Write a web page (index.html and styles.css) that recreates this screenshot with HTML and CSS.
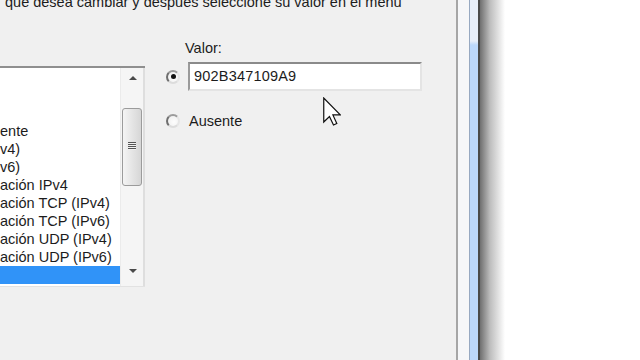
FILE: index.html
```html
<!DOCTYPE html>
<html lang="es">
  <head>
    <meta charset="UTF-8" />
    <meta name="viewport" content="width=device-width, initial-scale=1.0" />
    <title>Opciones avanzadas</title>
    <link rel="stylesheet" href="styles.css">
  </head>
  <body>
    <div class="screen">
      <div class="dialog">
        <p class="caption">que desea cambiar y después seleccione su valor en el menú</p>
        <div class="props">
          <div class="listbox">
            <ul class="items">
              <li></li>
              <li></li>
              <li></li>
              <li>ente</li>
              <li>v4)</li>
              <li>v6)</li>
              <li>ación IPv4</li>
              <li>ación TCP (IPv4)</li>
              <li>ación TCP (IPv6)</li>
              <li>ación UDP (IPv4)</li>
              <li>ación UDP (IPv6)</li>
              <li class="selected"></li>
            </ul>
            <div class="scrollbar">
              <span class="arrow up"></span>
              <div class="thumb"><span class="grip"></span></div>
              <span class="arrow down"></span>
            </div>
          </div>

          <div class="value-panel">
            <div class="field-label">Valor:</div>
            <div class="option">
              <span class="radio checked"></span>
              <div class="textbox">902B347109A9</div>
            </div>
            <div class="option absent">
              <span class="radio"></span>
              <span>Ausente</span>
            </div>
          </div>
        </div>
      </div>

      <div class="frame">
        <div class="frame-line"></div>
        <div class="frame-inner"></div>
        <div class="frame-edge"></div>
        <div class="frame-glass"></div>
        <div class="frame-dark"></div>
        <div class="frame-shadow"></div>
      </div>
      <div class="desktop"></div>

      <svg class="cursor" width="18" height="29" viewBox="0 0 12 19">
        <path d="M0.5 0.5 L0.5 16.5 L4.3 12.8 L7 18.5 L9.2 17.5 L6.6 11.8 L11.5 11.8 Z"
              fill="#fff" stroke="#111" stroke-width="0.8" stroke-linejoin="miter" />
      </svg>
    </div>
  </body>
</html>
```

FILE: styles.css
```css
body {
  margin: 0;
  font-family: "Liberation Sans", Arial, sans-serif;
  font-size: 14.5px;
  color: #1c1c1c;
  background-color: #fff;
}

.screen {
  position: relative;
  display: flex;
  width: 640px;
  height: 360px;
  overflow: hidden;
}

.dialog {
  width: 456px;
  flex-shrink: 0;
  background-color: #f0f0f0;
}

/* first line of the dialog text, partly above the crop */
.caption {
  margin: -7px 0 0 0;
  padding-left: 5px;
  line-height: 18px;
  white-space: nowrap;
}

.props {
  display: flex;
  margin-top: 28px;
}

/* list of properties */
.listbox {
  display: flex;
  width: 145px;
  margin-top: 27px;
  border-top: 2px solid #8f8f8f;
  border-bottom: 1px solid #e2e2e2;
}

.items {
  width: 120px;
  margin: 0;
  padding: 0 0 2px 0;
  list-style: none;
  background-color: #fff;
  white-space: nowrap;
  overflow: hidden;
}

.items li {
  height: 18px;
  line-height: 18px;
}

.items li.selected {
  background-color: #3093f8;
}

.scrollbar {
  display: flex;
  flex-direction: column;
  align-items: center;
  width: 22px;
  padding-top: 8px;
  background-color: #f5f5f5;
  border-left: 1px solid #ebebeb;
  border-right: 2px solid #dedede;
}

.arrow {
  width: 0;
  height: 0;
  border-left: 4px solid transparent;
  border-right: 4px solid transparent;
  margin-left: 2px;
}

.arrow.up {
  border-bottom: 4px solid #4a4a4a;
}

.arrow.down {
  margin-top: auto;
  margin-bottom: 13px;
  border-top: 4px solid #4a4a4a;
}

.thumb {
  display: flex;
  align-items: center;
  justify-content: center;
  width: 18px;
  height: 76px;
  margin-top: 28px;
  border: 1px solid #9b9b9b;
  border-radius: 3px;
  background: linear-gradient(to right, #f4f4f4, #e2e2e2 60%, #d6d6d6);
}

.grip {
  width: 8px;
  height: 8px;
  margin-top: -2px;
  background: repeating-linear-gradient(to bottom, #555 0 1px, #f0f0f0 1px 2px);
}

/* value column */
.value-panel {
  display: flex;
  flex-direction: column;
  margin-left: 21px;
}

.field-label {
  margin-left: 19px;
  line-height: 18px;
}

.option {
  display: flex;
  align-items: center;
  gap: 8px;
  margin-top: 5px;
}

.option.absent {
  gap: 9px;
  margin-top: 21px;
  line-height: 18px;
}

.radio {
  display: flex;
  align-items: center;
  justify-content: center;
  box-sizing: border-box;
  width: 14px;
  height: 14px;
  border-radius: 50%;
  border: 2px solid;
  border-color: #9c9c9c #e6e6e6 #dcdcdc #6e6e6e;
  background: radial-gradient(circle at 60% 60%, #fdfdfd, #ececec);
}

.radio.checked::after {
  content: "";
  width: 5px;
  height: 5px;
  border-radius: 50%;
  background-color: #111;
}

.textbox {
  box-sizing: border-box;
  width: 234px;
  height: 29px;
  padding-left: 4px;
  line-height: 25px;
  background-color: #fff;
  border-top: 2px solid #8a8a8a;
  border-left: 2px solid #9a9a9a;
  border-right: 2px solid #e4e4e4;
  border-bottom: 2px solid #e4e4e4;
  letter-spacing: 0.2px;
}

/* window frame at the right */
.frame {
  display: flex;
  flex-shrink: 0;
}

.frame-line {
  width: 2px;
  background-color: #a6a6a6;
}

.frame-inner {
  width: 11px;
  background-color: #f6f7f9;
}

.frame-edge {
  width: 1px;
  background-color: #97a9c2;
}

.frame-glass {
  width: 8px;
  background: linear-gradient(to bottom, #e7eef9 0, #e7eef9 41px, #bcd8fb 45px);
}

.frame-dark {
  width: 2px;
  background-color: #4a4a4a;
}

.frame-shadow {
  width: 25px;
  background: linear-gradient(to right, #6f6f6f, #bdbdbd 40%, #fff);
}

.desktop {
  flex: 1;
  background-color: #fff;
}

.cursor {
  position: absolute;
  left: 323px;
  top: 97px;
}
```
